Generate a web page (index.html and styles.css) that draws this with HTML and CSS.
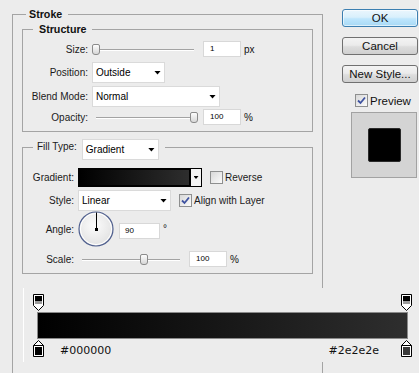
FILE: index.html
```html
<!DOCTYPE html>
<html lang="en">
<head>
    <meta charset="UTF-8">
    <meta name="viewport" content="width=device-width, initial-scale=1.0">
    <title>Layer Style - Stroke</title>
    <link rel="stylesheet" href="styles.css">
</head>
<body>
    <div class="dialog">
        <fieldset class="group stroke">
            <legend class="title">Stroke</legend>

            <fieldset class="group structure">
                <legend class="title sub">Structure</legend>

                <div class="row r-size">
                    <span class="label">Size:</span>
                    <div class="slider"><div class="track"></div><div class="thumb" style="left: 0px"></div></div>
                    <div class="input">1</div>
                    <span class="unit">px</span>
                </div>
                <div class="row r-position">
                    <span class="label">Position:</span>
                    <div class="select s-position">Outside<span class="arrow"></span></div>
                </div>
                <div class="row r-blend">
                    <span class="label">Blend Mode:</span>
                    <div class="select s-blend">Normal<span class="arrow"></span></div>
                </div>
                <div class="row r-opacity">
                    <span class="label">Opacity:</span>
                    <div class="slider"><div class="track"></div><div class="thumb" style="left: 98px"></div></div>
                    <div class="input">100</div>
                    <span class="unit">%</span>
                </div>
            </fieldset>

            <fieldset class="group fill">
                <legend class="fill-legend">
                    <div class="legend-row">
                        <span class="legend-label">Fill Type:</span>
                        <div class="select s-fill">Gradient<span class="arrow"></span></div>
                    </div>
                </legend>

                <div class="row r-gradient">
                    <span class="label">Gradient:</span>
                    <div class="swatch">
                        <div class="swatch-fill"></div>
                        <div class="swatch-drop"><span class="arrow small"></span></div>
                    </div>
                    <span class="check"></span>
                    <span class="check-text">Reverse</span>
                </div>
                <div class="row r-style">
                    <span class="label">Style:</span>
                    <div class="select s-style">Linear<span class="arrow"></span></div>
                    <span class="check checked">
                        <svg width="11" height="11" viewBox="0 0 11 11"><path d="M2 5.5l2.5 2.5l4.5-5.5" fill="none" stroke="#3e52a0" stroke-width="1.8"/></svg>
                    </span>
                    <span class="check-text">Align with Layer</span>
                </div>
                <div class="row r-angle">
                    <span class="label">Angle:</span>
                    <svg class="dial" width="36" height="36" viewBox="0 0 36 36">
                        <defs>
                            <radialGradient id="dialFill" cx="0.45" cy="0.4" r="0.65">
                                <stop offset="0" stop-color="#fcfcfc"/>
                                <stop offset="1" stop-color="#e0e0e0"/>
                            </radialGradient>
                        </defs>
                        <circle cx="18" cy="18" r="17" fill="url(#dialFill)" stroke="#50608f" stroke-width="1.2"/>
                        <circle cx="18" cy="18" r="15.6" fill="none" stroke="#ffffff" stroke-width="1"/>
                        <path d="M18.5 1.5V18" stroke="#000" stroke-width="1"/>
                        <rect x="17" y="17" width="3" height="3" fill="#000"/>
                    </svg>
                    <div class="input angle">90</div>
                    <span class="unit degree">°</span>
                </div>
                <div class="row r-scale">
                    <span class="label">Scale:</span>
                    <div class="slider"><div class="track"></div><div class="thumb" style="left: 62px"></div></div>
                    <div class="input">100</div>
                    <span class="unit">%</span>
                </div>
            </fieldset>
        </fieldset>

        <div class="actions">
            <div class="btn btn-ok">OK</div>
            <div class="btn">Cancel</div>
            <div class="btn">New Style...</div>
            <div class="preview-row">
                <span class="check checked">
                    <svg width="11" height="11" viewBox="0 0 11 11"><path d="M2 5.5l2.5 2.5l4.5-5.5" fill="none" stroke="#3e52a0" stroke-width="1.8"/></svg>
                </span>
                <span class="preview-text">Preview</span>
            </div>
            <div class="preview-box"><div class="preview-square"></div></div>
        </div>

        <!-- gradient editor strip, drawn over the stroke box -->
        <div class="gradient-editor">
            <div class="stops">
                <svg width="11" height="17" viewBox="0 0 11 17">
                    <path d="M0.5 0.5h10v11l-5 5l-5-5z" fill="#fff" stroke="#000"/>
                    <rect x="2" y="2" width="7" height="5" fill="#000"/>
                    <rect x="2" y="7" width="7" height="3" fill="#9c9c9c"/>
                </svg>
                <svg width="11" height="17" viewBox="0 0 11 17">
                    <path d="M0.5 0.5h10v11l-5 5l-5-5z" fill="#fff" stroke="#000"/>
                    <rect x="2" y="2" width="7" height="5" fill="#000"/>
                    <rect x="2" y="7" width="7" height="3" fill="#9c9c9c"/>
                </svg>
            </div>
            <div class="bar"></div>
            <div class="stops bottom">
                <svg width="11" height="17" viewBox="0 0 11 17">
                    <path d="M0.5 16.5v-11l5-5l5 5v11z" fill="#fff" stroke="#000"/>
                    <path d="M0.5 5.5h10" stroke="#000"/>
                    <rect x="2" y="7" width="7" height="8" fill="#000"/>
                </svg>
                <span class="hex">#000000</span>
                <span class="hex end">#2e2e2e</span>
                <svg width="11" height="17" viewBox="0 0 11 17">
                    <path d="M0.5 16.5v-11l5-5l5 5v11z" fill="#fff" stroke="#000"/>
                    <path d="M0.5 5.5h10" stroke="#000"/>
                    <rect x="2" y="7" width="7" height="8" fill="#3a3a3a"/>
                </svg>
            </div>
        </div>
    </div>
</body>
</html>
```

FILE: styles.css
```css
body {
    margin: 0;
    height: 373px;
    overflow: hidden;
    background: #ececec;
    color: #1a1a1a;
    font-family: 'Liberation Sans', Arial, sans-serif;
    font-size: 10px;
}

.dialog {
    position: relative;
    display: flex;
    align-items: flex-start;
    padding: 8px 0 0 12px;
}

/* group boxes */
.group {
    margin: 0;
    padding: 0;
    min-width: 0;
    border: 1px solid #a4a4a4;
}

.stroke {
    width: 311px;
    height: 380px;
    box-sizing: border-box;
    padding: 0 9px;
    flex: none;
}

.title {
    margin-left: 4px;
    padding: 0 6px 0 3px;
    font-size: 10.7px;
    font-weight: bold;
    line-height: 13px;
    color: #111;
}

.structure {
    margin-top: 2px;
    padding-bottom: 6px;
}

.structure > .title {
    margin-left: 10px;
    padding: 0 5px 0 6px;
}

.fill {
    margin-top: 7px;
    padding-bottom: 6px;
}

.fill-legend {
    margin-left: 10px;
    padding: 0 6px 0 4px;
    height: 16px;
}

.legend-row {
    display: flex;
    align-items: flex-start;
    height: 16px;
}

.legend-label {
    line-height: 16px;
}

.legend-row .select {
    margin-left: 5px;
}

/* rows */
.row {
    display: flex;
    align-items: center;
}

.label {
    flex: none;
    width: 65px;
    margin-right: 4px;
    text-align: right;
}

.fill .label {
    width: 51px;
}

.r-size { height: 16px; margin-top: 5px; }
.r-position { height: 21px; margin-top: 5px; }
.r-blend { height: 21px; margin-top: 3px; }
.r-opacity { height: 16px; margin-top: 2px; }

.r-gradient { height: 19px; margin-top: 13px; }
.r-style { height: 21px; margin-top: 3px; }
.r-angle { height: 36px; margin-top: 0; }
.r-scale { height: 16px; margin-top: 4px; }

/* controls */
.slider {
    position: relative;
    flex: none;
    width: 106px;
    height: 11px;
    margin-right: 5px;
}

.track {
    position: absolute;
    left: 4px;
    right: 4px;
    top: 5px;
    height: 2px;
    box-sizing: border-box;
    border-top: 1px solid #a3a3a3;
    background: #fff;
}

.thumb {
    position: absolute;
    top: 0;
    width: 8px;
    height: 11px;
    box-sizing: border-box;
    border: 1px solid #8b8b8b;
    border-radius: 2px 2px 3px 3px;
    background: linear-gradient(#fdfdfd, #d6d6d6);
}

.input {
    flex: none;
    width: 38px;
    height: 16px;
    box-sizing: border-box;
    margin-right: 3px;
    padding-left: 6px;
    border: 1px solid #d8d8d8;
    background: #fff;
    color: #000;
    font-size: 8px;
    line-height: 14px;
}

.input.angle {
    width: 41px;
    margin-top: 4px;
    padding-left: 5px;
}

.unit {
    color: #111;
}

.degree {
    margin-top: -2px;
}

.select {
    flex: none;
    display: flex;
    align-items: center;
    justify-content: space-between;
    height: 21px;
    box-sizing: border-box;
    padding: 0 3px;
    border: 1px solid #dadada;
    background: #fff;
    color: #000;
}

.s-position { width: 73px; }
.s-blend { width: 128px; }
.s-fill { width: 77px; }
.s-style { width: 93px; }

.arrow {
    width: 7px;
    height: 4px;
    background: #000;
    clip-path: polygon(0 0, 100% 0, 50% 100%);
}

.arrow.small {
    width: 5px;
    height: 3px;
}

.swatch {
    flex: none;
    display: flex;
    width: 124px;
    height: 19px;
    box-sizing: border-box;
    border: 1px solid #000;
    background: #000;
}

.swatch-fill {
    flex: 1;
    border: 1px solid #000;
    background: linear-gradient(to right, #000, #2e2e2e);
}

.swatch-drop {
    width: 10px;
    display: flex;
    align-items: center;
    justify-content: center;
    border-left: 1px solid #000;
    background: #f4f4f4;
}

.check {
    flex: none;
    display: flex;
    align-items: center;
    justify-content: center;
    width: 13px;
    height: 13px;
    box-sizing: border-box;
    border: 1px solid #8e8f8f;
    background: linear-gradient(135deg, #d8d8d8, #fbfbfb);
}

.r-gradient .check { margin-left: 8px; }
.r-style .check { margin-left: 8px; }

.check-text {
    margin-left: 2px;
}

.dial {
    flex: none;
    margin-right: 5px;
}

/* right column */
.actions {
    flex: none;
    display: flex;
    flex-direction: column;
    width: 76px;
    margin: 1px 0 0 19px;
}

.btn {
    height: 18px;
    box-sizing: border-box;
    margin-bottom: 10px;
    border: 1px solid #707070;
    border-radius: 3px;
    background: linear-gradient(#f3f3f3, #ebebeb 45%, #dddddd 55%, #cfcfcf);
    color: #111;
    font-size: 11.5px;
    line-height: 16px;
    text-align: center;
}

.btn-ok {
    border-color: #3c7fb1;
    background: linear-gradient(#eaf6fd, #d9f0fc 45%, #bee6fd 55%, #a7d9f5);
    box-shadow: inset 0 0 0 1px rgba(255, 255, 255, 0.6);
}

.preview-row {
    display: flex;
    align-items: center;
    height: 13px;
    margin-top: 1px;
    padding-left: 13px;
}

.preview-text {
    margin-left: 2px;
    font-size: 11.5px;
    color: #111;
}

.preview-box {
    display: flex;
    align-items: center;
    justify-content: center;
    width: 66px;
    height: 66px;
    box-sizing: border-box;
    margin: 5px 0 0 9px;
    border: 1px solid #a2a2a2;
    background: #d4d4d4;
}

.preview-square {
    width: 33px;
    height: 34px;
    box-sizing: border-box;
    border: 1px solid #2a2a2a;
    border-radius: 2px;
    background: #000;
}

/* gradient editor */
.gradient-editor {
    position: absolute;
    left: 23px;
    top: 288px;
    width: 396px;
    height: 74px;
    box-sizing: border-box;
    padding: 6px 7px 0 9px;
    border-left: 1px solid #fff;
    background: #ececec;
}

.stops {
    display: flex;
    justify-content: space-between;
    height: 17px;
}

.stops.bottom {
    margin-top: 1px;
}

.bar {
    height: 27px;
    box-sizing: border-box;
    margin: 1px 4px 0;
    border: 1px solid #8a8a8a;
    background: linear-gradient(to right, #000, #2e2e2e);
}

.hex {
    align-self: flex-end;
    margin-left: 16px;
    font-family: 'DejaVu Sans', Verdana, sans-serif;
    font-size: 11px;
    line-height: 13px;
    color: #111;
}

.hex.end {
    margin-left: auto;
    margin-right: 22px;
}
```
